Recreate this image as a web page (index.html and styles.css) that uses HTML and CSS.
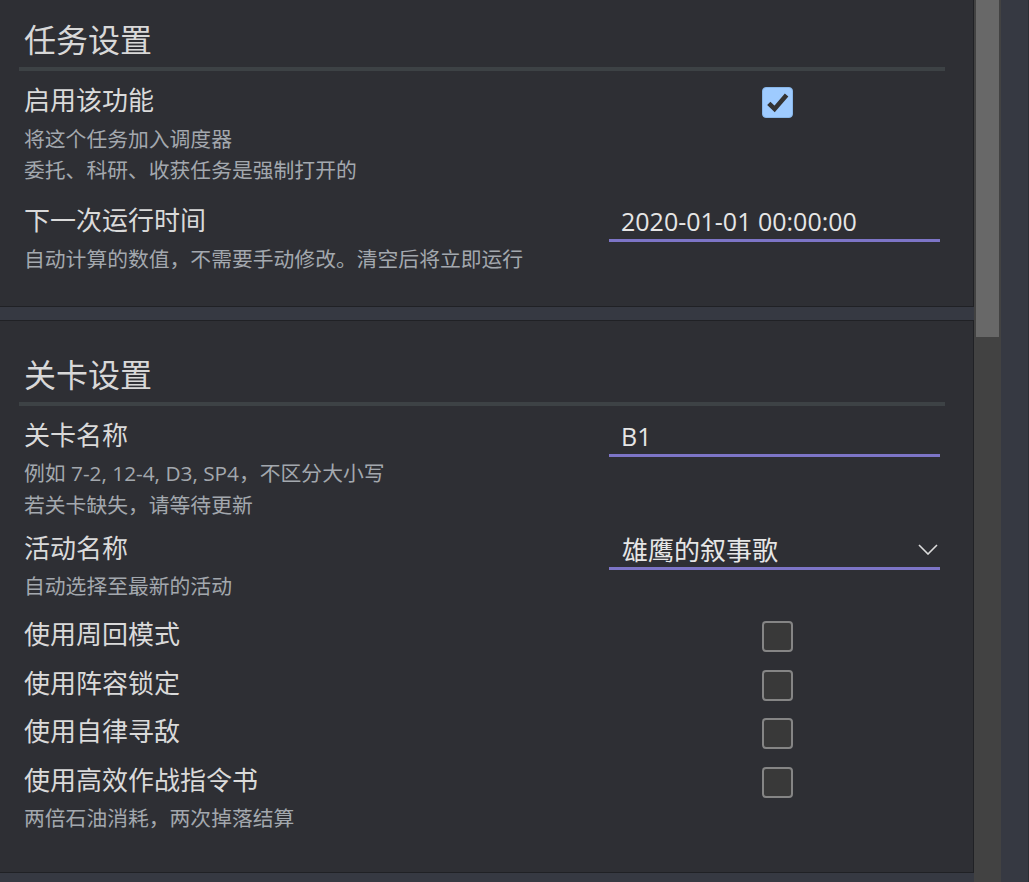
FILE: index.html
```html
<!DOCTYPE html>
<html lang="zh-CN">
<head>
<meta charset="utf-8">
<title>设置</title>
<link rel="stylesheet" href="styles.css">
</head>
<body>
<div class="app">
  <main class="content">
    <section class="card">
      <h2 class="card-title">任务设置</h2>
      <div class="divider"></div>
      <div class="rows">
        <div class="row row-check">
          <div class="info">
            <div class="label">启用该功能</div>
            <div class="subs">
              <div class="sub">将这个任务加入调度器</div>
              <div class="sub">委托、科研、收获任务是强制打开的</div>
            </div>
          </div>
          <div class="control control-center">
            <svg class="check-icon" width="31" height="31" viewBox="0 0 31 31" aria-label="checked">
              <rect x="0.5" y="0.5" width="30" height="30" rx="3.5" fill="#9ecbff" stroke="#88b6e8"/>
              <path d="M6.8 16.3 L12.6 22 L24.6 8" fill="none" stroke="#333333" stroke-width="4.6"/>
            </svg>
          </div>
        </div>
        <div class="row row-input">
          <div class="info">
            <div class="label">下一次运行时间</div>
            <div class="subs">
              <div class="sub">自动计算的数值，不需要手动修改。清空后将立即运行</div>
            </div>
          </div>
          <div class="control">
            <div class="field">2020-01-01 00:00:00</div>
          </div>
        </div>
      </div>
    </section>

    <section class="card">
      <h2 class="card-title">关卡设置</h2>
      <div class="divider"></div>
      <div class="rows">
        <div class="row row-input">
          <div class="info">
            <div class="label">关卡名称</div>
            <div class="subs">
              <div class="sub">例如 7-2, 12-4, D3, SP4，不区分大小写</div>
              <div class="sub">若关卡缺失，请等待更新</div>
            </div>
          </div>
          <div class="control">
            <div class="field">B1</div>
          </div>
        </div>
        <div class="row">
          <div class="info">
            <div class="label">活动名称</div>
            <div class="subs">
              <div class="sub">自动选择至最新的活动</div>
            </div>
          </div>
          <div class="control">
            <div class="field select">
              <span class="select-text">雄鹰的叙事歌</span>
              <svg class="chevron" width="20" height="11" viewBox="0 0 20 11"><path d="M1 1 L10 10 L19 1" fill="none" stroke="#dcdcdc" stroke-width="1.6"/></svg>
            </div>
          </div>
        </div>
        <div class="row">
          <div class="info"><div class="label">使用周回模式</div></div>
          <div class="control control-center"><span class="checkbox"></span></div>
        </div>
        <div class="row">
          <div class="info"><div class="label">使用阵容锁定</div></div>
          <div class="control control-center"><span class="checkbox"></span></div>
        </div>
        <div class="row">
          <div class="info"><div class="label">使用自律寻敌</div></div>
          <div class="control control-center"><span class="checkbox"></span></div>
        </div>
        <div class="row row-check">
          <div class="info">
            <div class="label">使用高效作战指令书</div>
            <div class="subs">
              <div class="sub">两倍石油消耗，两次掉落结算</div>
            </div>
          </div>
          <div class="control control-center"><span class="checkbox"></span></div>
        </div>
      </div>
    </section>
  </main>
  <div class="scrollbar"><div class="thumb"></div></div>
  <div class="gutter"></div>
</div>
</body>
</html>
```

FILE: styles.css
```css
html, body {
  margin: 0;
  padding: 0;
}

body {
  background: #363942;
  font-family: "Open Sans", "Noto Sans CJK SC", sans-serif;
  color: #dadada;
}

.app {
  display: flex;
  height: 882px;
  overflow: hidden;
  background: #363942;
}

.content {
  width: 974px;
  flex: none;
  display: flex;
  flex-direction: column;
  gap: 13px;
  margin-top: -15px;
}

.card {
  background: #2e2f34;
  border: 1px solid #202125;
  border-left: none;
  padding: 28px 28px 29px 19px;
}

.card-title {
  margin: 0;
  padding-left: 5px;
  font-family: "Noto Sans CJK SC", sans-serif;
  font-size: 32px;
  font-weight: 400;
  line-height: 48px;
  color: #d8d8d8;
}

.divider {
  height: 4px;
  margin-top: 5px;
  background: #3d4245;
}

.rows {
  padding-top: 4px;
}

.row {
  display: flex;
  align-items: flex-start;
  padding: 6px 0 6.5px 5px;
}

.info {
  flex: 1;
  min-width: 0;
}

.label {
  font-family: "Noto Sans CJK SC", sans-serif;
  font-size: 26px;
  line-height: 36px;
  color: #dadada;
}

.subs {
  margin-top: 6.5px;
}

.row-check .subs {
  margin-bottom: 2px;
}

.row-input .subs {
  margin-bottom: -5px;
}

.sub {
  font-size: 20.8px;
  line-height: 31.5px;
  color: #a3a8ae;
}

.control {
  width: 336px;
  flex: none;
}

.control-center {
  display: flex;
  justify-content: center;
  align-items: flex-start;
  height: 36px;
  padding-left: 1px;
  padding-top: 6px;
  box-sizing: border-box;
}

.check-icon {
  display: block;
  flex: none;
}

.checkbox {
  display: block;
  flex: none;
  width: 31px;
  height: 31px;
  box-sizing: border-box;
  border: 2px solid #858585;
  border-radius: 4px;
  background: #393939;
}

.field {
  width: 319px;
  height: 36px;
  box-sizing: content-box;
  padding: 2px 0 0 12px;
  border-bottom: 3px solid #7d75c7;
  font-family: "Open Sans", sans-serif;
  font-size: 25px;
  line-height: 36px;
  color: #e6e6e6;
}

.select {
  display: flex;
  align-items: center;
  justify-content: space-between;
  padding-right: 2px;
  width: 317px;
}

.select-text {
  font-family: "Noto Sans CJK SC", sans-serif;
  font-size: 26px;
  line-height: 36px;
  margin-left: 1px;
}

.chevron {
  display: block;
  margin-top: 2px;
}

.scrollbar {
  width: 27px;
  flex: none;
  box-sizing: border-box;
  padding: 0 2px;
  background: #424242;
}

.thumb {
  height: 337px;
  background: #686868;
}

.gutter {
  flex: 1;
  border-right: 1px solid #2c2e34;
}
```
